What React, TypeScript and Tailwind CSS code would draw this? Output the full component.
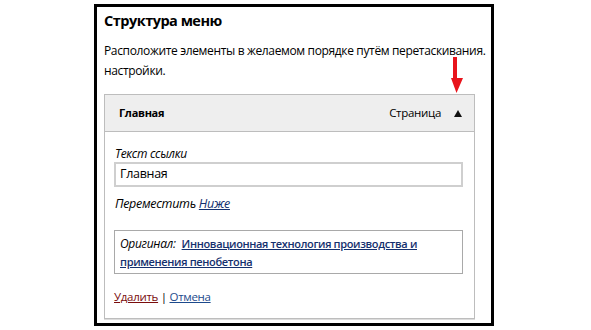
export default function App() {
  return (
    <div className="h-[330px] w-[591px] bg-white font-['Open_Sans',sans-serif] text-black">
      <div className="pl-[94px] pt-[4px]">
        <div className="relative h-[322px] w-[400px] border-[3px] border-black pl-[7px] pt-[4px]">
          <h2 className="text-[14.5px] font-bold leading-[20px] tracking-[-0.5px]">Структура меню</h2>
          <p className="mt-[10px] whitespace-nowrap text-[12px] leading-[20px] tracking-[-0.35px]">
            Расположите элементы в желаемом порядке путём перетаскивания.
            <br />
            настройки.
          </p>

          <div className="mt-[13px] w-[371px] border border-[#bdbdbd] shadow-[0_1px_0_#dcdcdc]">
            <div className="flex h-[37px] items-center border-b border-[#bdbdbd] bg-[#eeeeee] pl-[14px] pr-[12px]">
              <span className="text-[11px] font-bold tracking-[-0.3px]">Главная</span>
              <span className="ml-auto text-[11.5px] tracking-[-0.3px]">Страница</span>
              <svg className="ml-[13px]" width="8" height="7" viewBox="0 0 8 7">
                <path d="M4 0 L8 7 L0 7 Z" fill="#111" />
              </svg>
            </div>

            <div className="px-[9px] pb-[12px] pt-[14px]">
              <div className="pl-[1px] text-[12px] italic leading-[16px] tracking-[-0.3px]">Текст ссылки</div>
              <div className="flex h-[25px] w-[349px] items-center border-2 border-[#cfcfcf] px-[4px] text-[12.5px] tracking-[-0.3px]">
                Главная
              </div>
              <div className="mt-[8px] pl-[1px] text-[12.5px] italic leading-[18px] tracking-[-0.3px]">
                Переместить <span className="text-[#14306e] underline">Ниже</span>
              </div>

              <div className="mt-[17px] w-[349px] border border-[#a9a9a9] px-[5px] py-[3px] leading-[17px]">
                <span className="text-[12px] italic tracking-[-0.3px]">Оригинал:</span>
                <span className="ml-[6px] text-[11px] font-semibold tracking-[-0.35px] text-[#14306e] underline">
                  Инновационная технология производства и применения пенобетона
                </span>
              </div>

              <div className="mt-[14px] text-[11.5px] leading-[18px] tracking-[-0.3px]">
                <span className="text-[#7a0d0d] underline">Удалить</span> | <span className="text-[#1d4a8c] underline">Отмена</span>
              </div>
            </div>
          </div>

          <svg className="absolute left-[353px] top-[50px]" width="14" height="37" viewBox="0 0 14 37">
            <path d="M3 0 L7 0 L7 21 L13 21 L6.5 36 L1 21 L3 21 Z" fill="#e8141c" />
          </svg>
        </div>
      </div>
    </div>
  );
}
